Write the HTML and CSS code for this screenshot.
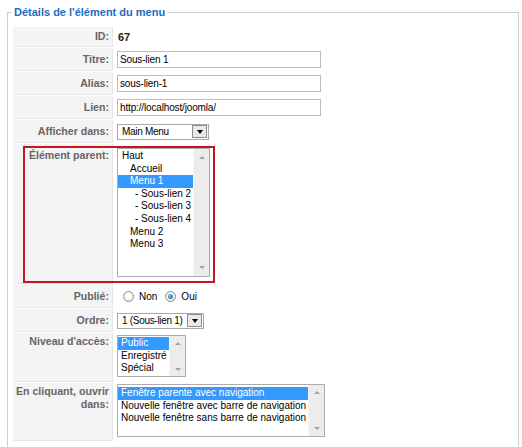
FILE: index.html
```html
<!DOCTYPE html>
<html lang="fr">
<head>
<meta charset="utf-8">
<title>Détails de l'élément du menu</title>
<link rel="stylesheet" href="styles.css">
</head>
<body>
<fieldset class="panel">
  <legend class="panel-title">Détails de l'élément du menu</legend>
  <div class="form">
    <div class="row row-id">
      <div class="key">ID:</div>
      <div class="val"><strong class="id">67</strong></div>
    </div>
    <div class="row row-field">
      <div class="key">Titre:</div>
      <div class="val"><input class="text" type="text" value="Sous-lien 1"></div>
    </div>
    <div class="row row-field">
      <div class="key">Alias:</div>
      <div class="val"><input class="text" type="text" value="sous-lien-1"></div>
    </div>
    <div class="row row-field">
      <div class="key">Lien:</div>
      <div class="val"><input class="text" type="text" value="http://localhost/joomla/"></div>
    </div>
    <div class="row row-field">
      <div class="key">Afficher dans:</div>
      <div class="val">
        <div class="select sel-menu"><span class="sel-text">Main Menu</span><span class="drop"></span></div>
      </div>
    </div>
    <div class="row row-parent">
      <div class="key key-top key-parent">Élément parent:</div>
      <div class="val val-top">
        <div class="listbox lb-parent">
          <ul class="options">
            <li class="lvl0">Haut</li>
            <li class="lvl1">Accueil</li>
            <li class="lvl1 sel">Menu 1</li>
            <li class="lvl2">- Sous-lien 2</li>
            <li class="lvl2">- Sous-lien 3</li>
            <li class="lvl2">- Sous-lien 4</li>
            <li class="lvl1">Menu 2</li>
            <li class="lvl1">Menu 3</li>
          </ul>
          <div class="scroll"><span class="arrow-up"></span><span class="arrow-down"></span></div>
        </div>
      </div>
      <div class="annot"></div>
    </div>
    <div class="row row-field">
      <div class="key">Publié:</div>
      <div class="val">
        <span class="radio"></span><span class="radio-label">Non</span>
        <span class="radio checked"></span><span class="radio-label">Oui</span>
      </div>
    </div>
    <div class="row row-field">
      <div class="key">Ordre:</div>
      <div class="val">
        <div class="select sel-order"><span class="sel-text">1 (Sous-lien 1)</span><span class="drop"></span></div>
      </div>
    </div>
    <div class="row row-level">
      <div class="key key-top key-small">Niveau d'accès:</div>
      <div class="val val-top">
        <div class="listbox lb-level">
          <ul class="options">
            <li class="sel">Public</li>
            <li>Enregistré</li>
            <li>Spécial</li>
          </ul>
          <div class="scroll"><span class="arrow-up"></span><span class="arrow-down"></span></div>
        </div>
      </div>
    </div>
    <div class="row row-target">
      <div class="key key-top key-small">En cliquant, ouvrir dans:</div>
      <div class="val val-top">
        <div class="listbox lb-target">
          <ul class="options">
            <li class="sel">Fenêtre parente avec navigation</li>
            <li>Nouvelle fenêtre avec barre de navigation</li>
            <li>Nouvelle fenêtre sans barre de navigation</li>
          </ul>
          <div class="scroll"><span class="arrow-up"></span><span class="arrow-down"></span></div>
        </div>
      </div>
    </div>
  </div>
</fieldset>
</body>
</html>
```
FILE: styles.css
```css
* { box-sizing: border-box; }
html, body { overflow: hidden; }
body {
  margin: 0;
  background: #fff;
  font-family: "Liberation Sans", Arial, sans-serif;
  color: #000;
}
.panel {
  margin: 6px 0 0 7px;
  width: 512px;
  min-width: 0;
  height: 470px;
  border: 1px solid #cfcfcf;
  padding: 8px 4px 0 5px;
}
.panel-title {
  margin-left: -1px;
  padding: 0 2px;
  font-size: 11px;
  font-weight: bold;
  line-height: 13px;
  color: #1c6cc0;
}
.form {
  display: flex;
  flex-direction: column;
  gap: 1px;
}
.row {
  display: grid;
  grid-template-columns: 100px 1fr;
  column-gap: 1px;
  position: relative;
}
.row-id { height: 20px; }
.row-field { height: 23px; }
.row-parent { height: 140px; }
.row-level { height: 49px; }
.row-target { height: 58px; }

.key {
  background: #f4f4f4;
  border-right: 1px solid #e6e6e6;
  border-bottom: 1px solid #e6e6e6;
  padding-right: 3px;
  color: #666;
  font-weight: bold;
  font-size: 10.6px;
  line-height: 13px;
  text-align: right;
  display: flex;
  align-items: center;
  justify-content: flex-end;
}
.key-top { align-items: flex-start; }
.key-parent { padding-top: 5px; }
.key-small { padding-top: 2px; }

.val {
  padding-left: 3px;
  display: flex;
  align-items: center;
  font-size: 10px;
}
.val-top { align-items: flex-start; }
.id { font-size: 11px; font-weight: bold; color: #222; padding-left: 1px; }

.text {
  width: 204px;
  height: 17px;
  margin: 0;
  border: 1px solid #bcbcbc;
  padding: 0 2px;
  font-family: "Liberation Sans", Arial, sans-serif;
  font-size: 10px;
  letter-spacing: -0.15px;
  color: #000;
  background: #fff;
  outline: none;
}

.select {
  height: 16px;
  border: 1px solid #a9a9a9;
  display: flex;
  align-items: center;
  justify-content: space-between;
  padding-left: 4px;
  padding-right: 1px;
  background: #fff;
}
.sel-menu { width: 92px; }
.sel-order { width: 87px; }
.sel-text { font-size: 10px; letter-spacing: -0.3px; white-space: nowrap; }
.drop {
  flex: none;
  width: 15px;
  height: 13px;
  border: 1px solid #8d8d8d;
  background: #e9e9e9;
  display: flex;
  align-items: center;
  justify-content: center;
}
.drop::after {
  content: "";
  border-left: 3.5px solid transparent;
  border-right: 3.5px solid transparent;
  border-top: 4px solid #000;
  margin-top: 1px;
}

.radio {
  width: 11px;
  height: 11px;
  border-radius: 50%;
  border: 1px solid #8f8f8f;
  background: radial-gradient(circle at 50% 40%, #ffffff 30%, #dcdcdc 100%);
  margin-left: 6px;
  display: flex;
  align-items: center;
  justify-content: center;
}
.radio + .radio-label { margin-left: 5px; font-size: 10px; }
.radio-label + .radio { margin-left: 8px; }
.radio.checked::after {
  content: "";
  width: 5px;
  height: 5px;
  border-radius: 50%;
  background: radial-gradient(circle at 40% 35%, #7cc4f2 0%, #1a6fb4 80%);
}

.listbox {
  display: flex;
  border: 1px solid #adadad;
  background: #fff;
}
.lb-parent { width: 93px; height: 129px; margin-top: 4px; }
.lb-level { width: 69px; height: 42px; margin-top: 2px; }
.lb-target { width: 208px; height: 53px; margin-top: 1px; }
.options {
  list-style: none;
  margin: 0;
  padding: 1px 0 0;
  flex: 1;
  min-width: 0;
  font-size: 10px;
  line-height: 12.6px;
  white-space: nowrap;
}
.lb-level .options { padding-top: 1px; }
.lb-target .options { padding-top: 2px; }
.options li { padding-left: 3px; }
.options li.lvl0 { padding-left: 4px; }
.options li.lvl1 { padding-left: 12px; }
.options li.lvl2 { padding-left: 17px; }
.options li.sel { background: #3399ff; color: #fff; }

.scroll {
  width: 16px;
  background: #ececec;
  border-left: 1px solid #f6f6f6;
  display: flex;
  flex-direction: column;
  justify-content: space-between;
  align-items: center;
  padding: 7px 0 7px;
}
.lb-level .scroll { padding: 6px 0 5px; }
.lb-target .scroll { padding: 6px 0 6px; }
.arrow-up {
  border-left: 3px solid transparent;
  border-right: 3px solid transparent;
  border-bottom: 3px solid #a2a2a2;
}
.arrow-down {
  border-left: 3px solid transparent;
  border-right: 3px solid transparent;
  border-top: 3px solid #a2a2a2;
}

.annot {
  position: absolute;
  left: 10px;
  top: 2px;
  width: 192px;
  height: 137px;
  border: 2px solid #c4161c;
  pointer-events: none;
}
```
